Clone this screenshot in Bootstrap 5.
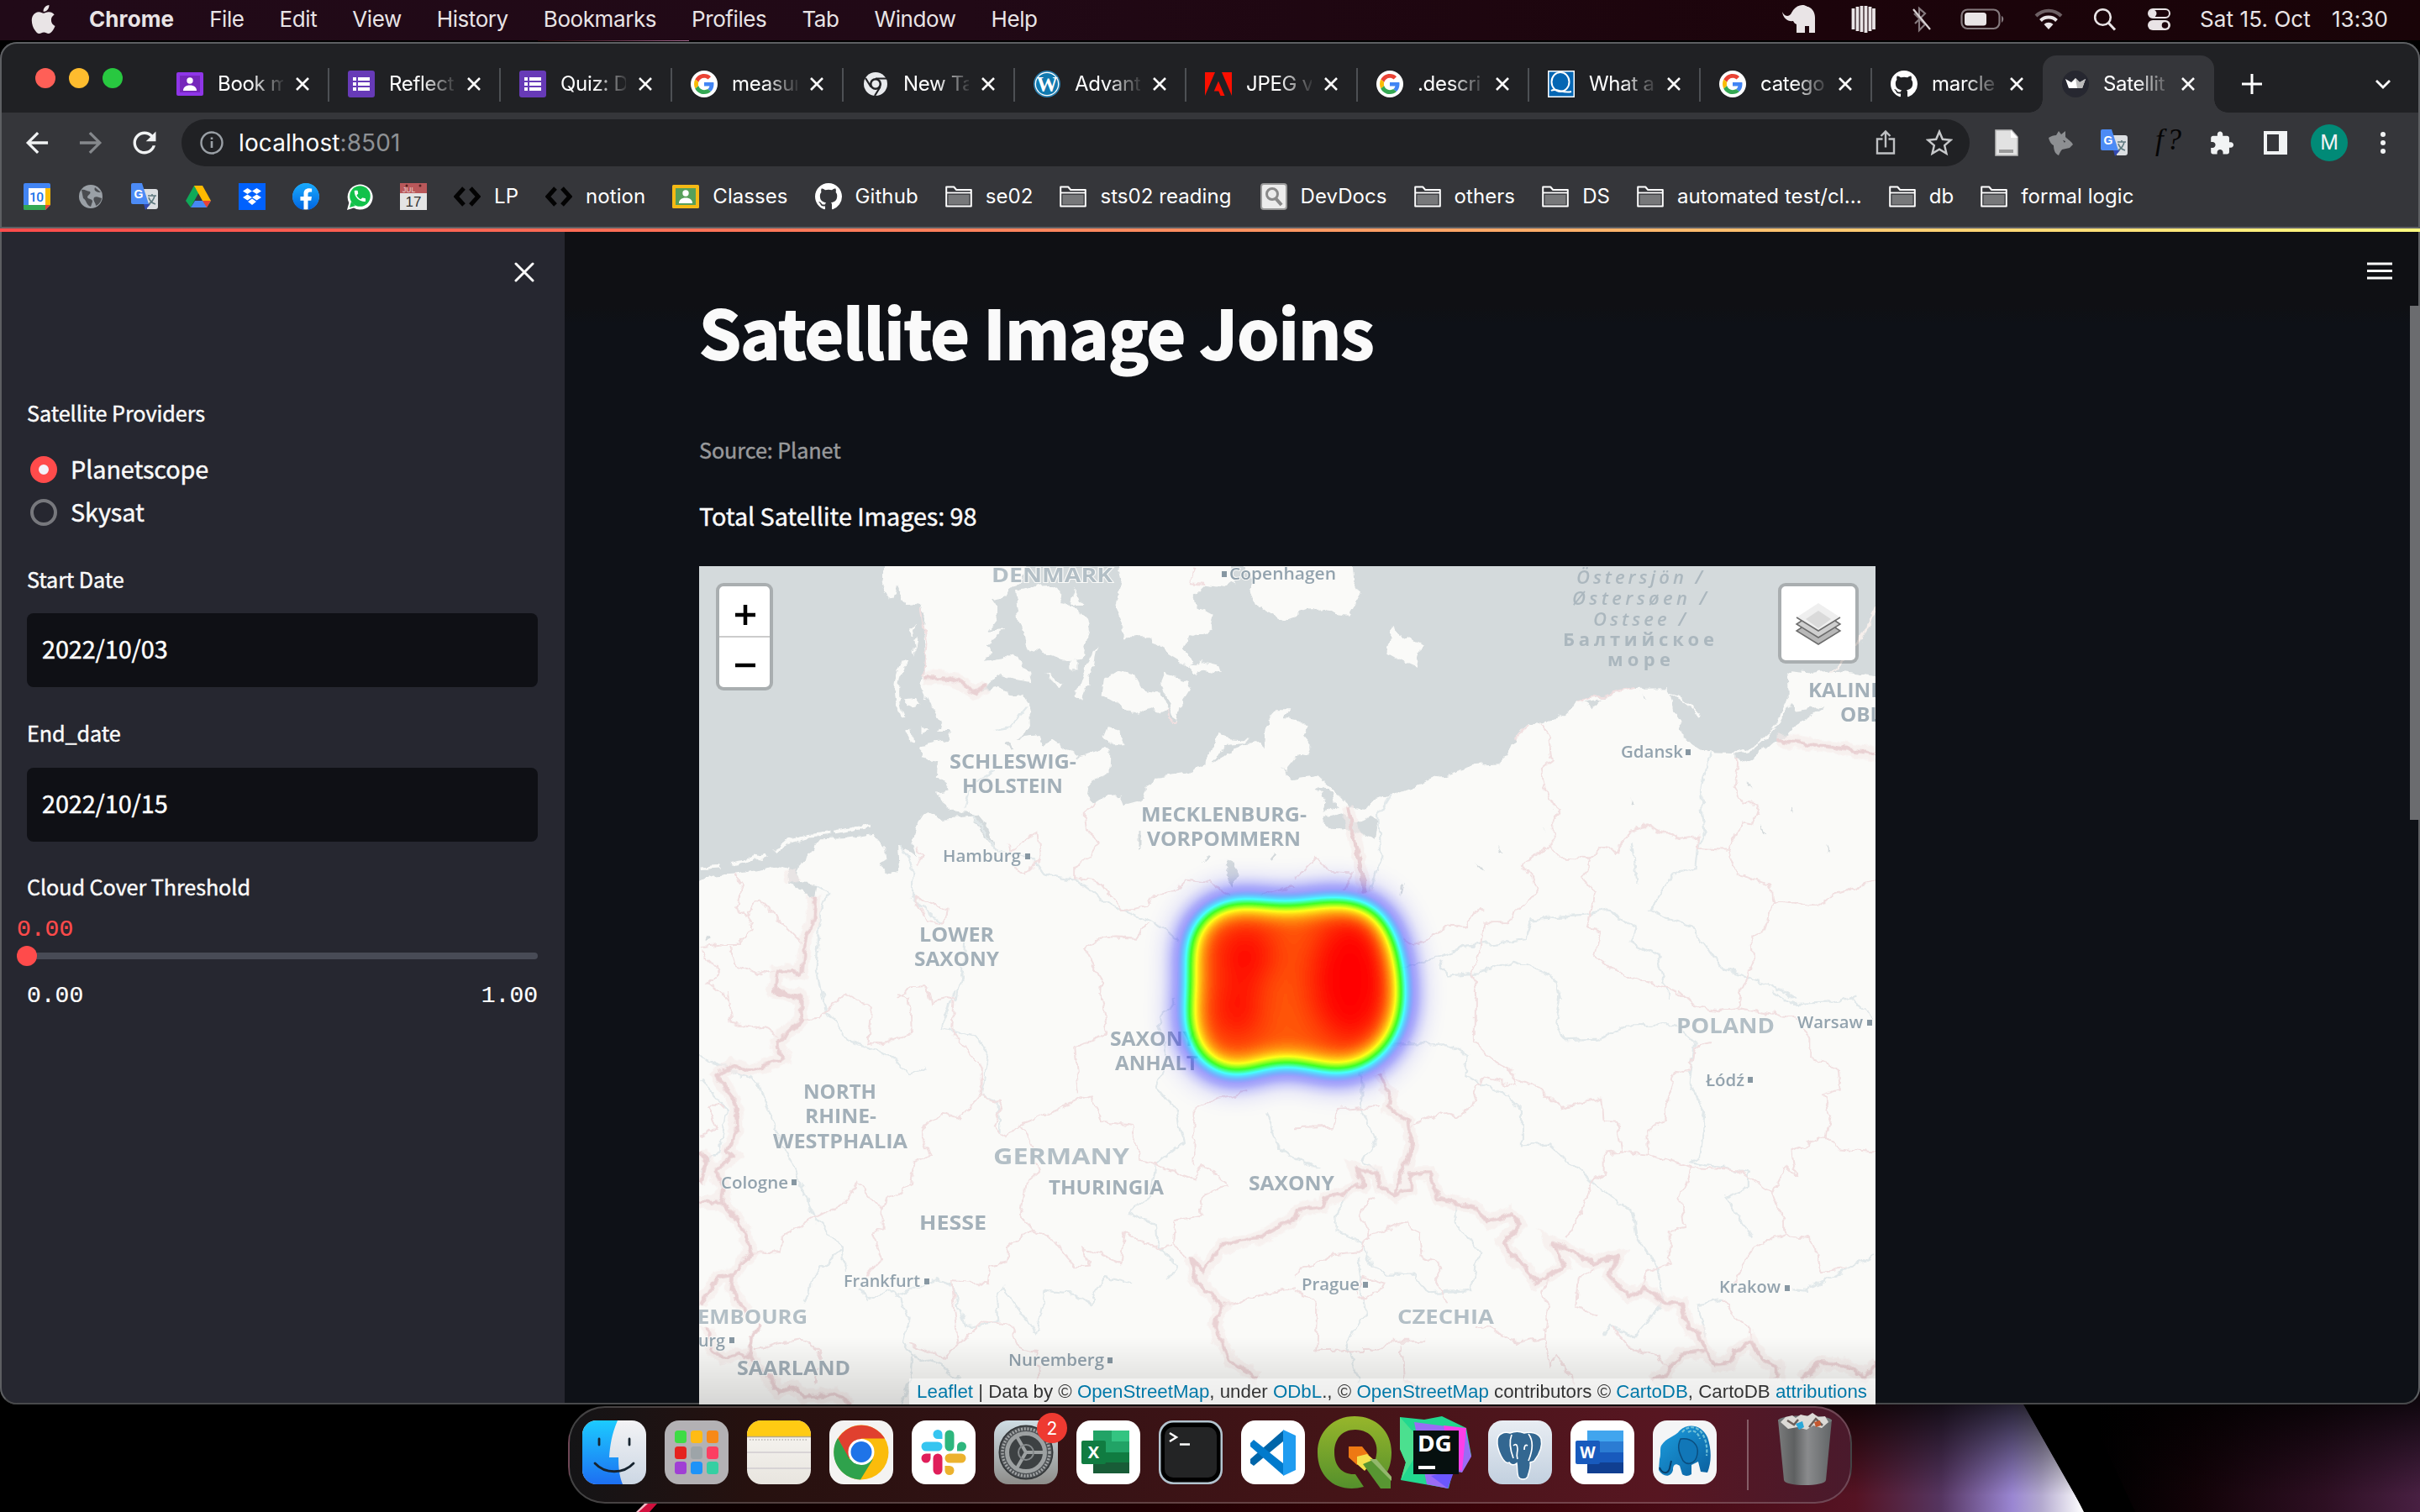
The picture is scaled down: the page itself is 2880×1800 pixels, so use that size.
<!DOCTYPE html>
<html lang="en">
<head>
<meta charset="utf-8">
<title>Satellite Image Joins</title>
<link href="https://cdn.jsdelivr.net/npm/bootstrap@5.3.0/dist/css/bootstrap.min.css" rel="stylesheet">
<style>
html,body{width:2880px;height:1800px;overflow:hidden;background:#000}
body{font-family:Inter,"Liberation Sans",sans-serif;color:#fff;margin:0}
svg{display:block;flex:none}
svg text{white-space:pre}
.desktop{width:2880px;height:1800px;position:relative;z-index:0}
.wallpaper{position:absolute;left:0;bottom:0;z-index:-1}
.menubar{height:48px;margin-bottom:2px;background:linear-gradient(90deg,#210a18,#210916 40%,#1c040b 75%,#190408);color:#e9e4e6;font-size:26px;line-height:46px;padding:0 38px 2px 37px;letter-spacing:-.42px}
.menus{gap:42px}
.menus b{font-weight:700;letter-spacing:.1px}
.tray{gap:34px}
.clock{width:224px;letter-spacing:.1px}
.browser{height:1622px;border-radius:20px;overflow:visible;position:relative;background:#35363a}
.browser::after{content:"";position:absolute;inset:0;border:2px solid #5d5f62;border-bottom-color:#48494b;border-radius:20px;pointer-events:none;z-index:2}
.tabstrip{height:84px;background:#202124;border-radius:20px 20px 0 0;padding-left:42px}
.lights{gap:16px;padding-top:31px;width:145px}
.lights i{width:24px;height:24px;border-radius:50%}
.ctab{width:204px;height:68px;margin-top:16px;padding-left:23px;position:relative;font-size:24px;letter-spacing:-.3px}
.ctab::after{content:"";position:absolute;right:-1px;top:15px;width:2px;height:40px;background:#4d5054}
.ctab.noline::after{display:none}
.ctab.current{background:#35363a;border-radius:16px 16px 0 0}
.ctab.current::before,.ctab.current::after{content:"";display:block;position:absolute;top:auto;bottom:0;width:16px;height:16px}
.ctab.current::before{left:-16px;background:radial-gradient(circle at 0 0,transparent 15.5px,#35363a 16px)}
.ctab.current::after{right:-16px;background:radial-gradient(circle at 100% 0,transparent 15.5px,#35363a 16px)}
.ttl{width:78px;margin:0 14px 0 17px;white-space:nowrap;overflow:hidden;-webkit-mask-image:linear-gradient(90deg,#000 50%,rgba(0,0,0,.1));mask-image:linear-gradient(90deg,#000 50%,rgba(0,0,0,.1))}
.toolrow{height:72px;padding:0 28px;color:#f1f3f4}
.omni{width:2128px;height:56px;border-radius:28px;background:#202124;margin:0 28px;padding:0 20px 0 22px;font-size:28px;letter-spacing:.1px}
.omni .dimmed{color:#8e9195}
.gap32{gap:32px}
.avatar{width:44px;height:44px;margin:0 -6px;border-radius:50%;background:#018a77;font-size:24px}
.marks{height:64px;padding:0 28px 8px;font-size:24px;letter-spacing:.07px;gap:32px}
.marks span{gap:16px;white-space:nowrap}
.hairline{height:2px;background:#5f6063}
.rainbow{height:4px;background:linear-gradient(90deg,#ff4b4b,#ff8f60 50%,#fffd80);position:relative;z-index:3}
.app{height:1394px;font-family:"Noto Sans CJK SC","Noto Sans CJK JP",sans-serif;background:#0e1117;border-radius:0 0 20px 20px;letter-spacing:-.08px;-webkit-text-stroke:.45px}
.side{width:672px;background:#262730;padding:0 32px;border-radius:0 0 0 20px;flex:none}
.side label,.field{font-size:25.2px;line-height:40px;display:block;color:#fafafa}
.closer{padding-top:36px;padding-right:4px;height:195px}
.opt{height:51px;font-size:28.8px;gap:16px;padding-left:4px;color:#fafafa}
.optname{margin-top:-2px}
.knob{width:32px;height:32px;border-radius:50%;border:4px solid #77787d}
.knob.on{border:10px solid #ff4b4b;background:#f3f3f9}
.datebox{height:88px;border-radius:8px;background:#0f1015;margin-top:21px;padding:0 18px 5px;font-size:28.8px}
.mono{font-family:"Liberation Mono",monospace;font-size:28px;line-height:32px;letter-spacing:0;-webkit-text-stroke:.2px}
.track{height:8px;border-radius:4px;background:#484b56;position:relative}
.track i{position:absolute;left:-12px;top:-8px;width:24px;height:24px;border-radius:50%;background:#ff4b4b}
.page{padding:69px 0 0 160px;position:relative;width:2208px;background:linear-gradient(#0f1014,#0f1014 90px,#0e1117 110px);border-radius:0 0 20px 0}
.page h1{font-size:80px;line-height:96px;font-weight:700;margin:0;color:#fafafa;white-space:nowrap;letter-spacing:-.75px;-webkit-text-stroke:2px}
.caption0{font-size:25.2px;line-height:40px;margin-top:74px;color:#98999b}
.total{font-size:28.8px;line-height:40px;margin-top:39px;color:#fafafa}
.burger{position:absolute;right:33px;top:36px}
.thumb{position:absolute;right:0;top:88px;width:12px;height:612px;background:#6b6c6f;z-index:3}
.mapbox{width:1400px;height:998px;margin-top:40px;position:relative;z-index:3;overflow:hidden;background:#d4dadc;font-family:"Liberation Sans",sans-serif;letter-spacing:0;-webkit-text-stroke:0}
.zoomer,.layers{position:absolute;top:20px;border:4px solid rgba(0,0,0,.2);border-radius:9px;background:#fff;background-clip:padding-box}
.zoomer{left:20px;width:68px;height:128px}
.layers{right:20px;width:96px;height:96px}
.zoomer svg{height:59px;width:60px}
.zoomer svg+svg{border-top:2px solid #ccc;height:61px}
.attrib{position:absolute;right:0;bottom:0;height:31px;width:1150px;background:rgba(255,255,255,.5);font-size:22.3px;line-height:31px;color:#333;padding-right:10px;white-space:nowrap}
.attrib a{color:#0078a8;text-decoration:none}
.shade{position:absolute;left:0;right:0;bottom:0;height:80px;background:linear-gradient(transparent,rgba(0,0,0,.14))}
.dock{width:1528px;height:116px;margin:2px auto 0;border-radius:44px;border:2px solid rgba(255,255,255,.2);background:linear-gradient(90deg,#141416,#26110f 14%,#331214 35%,#441417 60%,#571621 85%,#4a1a2c);padding:15px 15px 0;gap:22px}
.dock>svg{overflow:visible}
.rule{width:2px;flex:none;height:84px;margin:-1px 6px 0 14px;background:rgba(255,255,255,.3)}
.lbl text{font-family:"Open Sans","Noto Sans",sans-serif;font-weight:700;fill:#a3b0b9;font-size:23.500px;paint-order:stroke;stroke:#fafaf8;stroke-width:2px}
.lbl .town{font-size:20.5px;fill:#93a3ae;font-weight:600}
.lbl .land{fill:#b3bfc6}
.lbl .sea{fill:#abb7be;font-style:italic;stroke:none;font-size:22px;font-weight:600}
.thin{fill:none;stroke:#f1dfe0;stroke-width:2px}
.river{fill:none;stroke:#e1e8ea;stroke-width:2.2px}
.nation{fill:none;stroke:#e9d1d3;stroke-width:4.5px;stroke-linejoin:round}
.halo{fill:none;stroke:#f6ebea;stroke-width:16px;opacity:.6}
.thin path,.river path,.nation path,.halo path{vector-effect:non-scaling-stroke}
</style>
<script src="https://cdn.jsdelivr.net/npm/bootstrap@5.3.0/dist/js/bootstrap.bundle.min.js"></script>
</head>
<body>
<svg width="0" height="0" class="position-absolute">
<defs>
<linearGradient id="gBlue" x2="0" y2="1"><stop stop-color="#1ccbff"/><stop offset="1" stop-color="#1d6ff2"/></linearGradient>
<linearGradient id="gGrey" x2="0" y2="1"><stop stop-color="#f3f3f5"/><stop offset="1" stop-color="#ccd7e4"/></linearGradient>
<linearGradient id="gNote" x2="0" y2="1"><stop stop-color="#f8f6f2"/><stop offset="1" stop-color="#e8e5df"/></linearGradient>
<linearGradient id="gSet" x2="0" y2="1"><stop stop-color="#cfdde4"/><stop offset="1" stop-color="#8e8d8a"/></linearGradient>
<linearGradient id="gPg" x2="0" y2="1"><stop stop-color="#e8edf3"/><stop offset="1" stop-color="#c2d0df"/></linearGradient>
<linearGradient id="gQ" x2="0" y2="1"><stop stop-color="#97b62b"/><stop offset="1" stop-color="#54902c"/></linearGradient>
<linearGradient id="gFb" x2="0" y2="1"><stop stop-color="#18acfe"/><stop offset="1" stop-color="#0163e0"/></linearGradient>
<linearGradient id="gBin" x2="1" y2="0"><stop stop-color="#7c8080"/><stop offset=".3" stop-color="#5f6464"/><stop offset=".55" stop-color="#8d9192"/><stop offset="1" stop-color="#63696a"/></linearGradient>
<linearGradient id="gEl" x2="1" y2="1"><stop stop-color="#1d9fe0"/><stop offset="1" stop-color="#0a5f9e"/></linearGradient>
<symbol id="x" viewBox="0 0 18 18"><path d="M2 2l14 14M16 2L2 16" stroke="#fff" stroke-width="2.6" fill="none"/></symbol>
<symbol id="gh" viewBox="0 0 16 16"><path fill="#fff" d="M8 0C3.58 0 0 3.58 0 8c0 3.54 2.29 6.53 5.47 7.59.4.07.55-.17.55-.38 0-.19-.01-.82-.01-1.49-2.01.37-2.53-.49-2.69-.94-.09-.23-.48-.94-.82-1.13-.28-.15-.68-.52-.01-.53.63-.01 1.08.58 1.23.82.72 1.21 1.87.87 2.33.66.07-.52.28-.87.51-1.07-1.78-.2-3.64-.89-3.64-3.95 0-.87.31-1.59.82-2.15-.08-.2-.36-1.02.08-2.12 0 0 .67-.21 2.2.82.64-.18 1.32-.27 2-.27s1.36.09 2 .27c1.53-1.04 2.2-.82 2.2-.82.44 1.1.16 1.92.08 2.12.51.56.82 1.27.82 2.15 0 3.07-1.87 3.75-3.65 3.95.29.25.54.73.54 1.48 0 1.07-.01 1.93-.01 2.2 0 .21.15.46.55.38A8.01 8.01 0 0 0 16 8c0-4.42-3.58-8-8-8"/></symbol>
<symbol id="goo" viewBox="0 0 32 32"><circle cx="16" cy="16" r="16" fill="#fff"/><g transform="translate(4 4) scale(.5)"><path fill="#EA4335" d="M24 9.5c3.54 0 6.71 1.22 9.21 3.6l6.85-6.85C35.9 2.38 30.47 0 24 0 14.62 0 6.51 5.38 2.56 13.22l7.98 6.19C12.43 13.72 17.74 9.5 24 9.5z"/><path fill="#4285F4" d="M46.98 24.55c0-1.57-.15-3.09-.38-4.55H24v9.02h12.94c-.58 2.96-2.26 5.48-4.78 7.18l7.73 6c4.51-4.18 7.09-10.36 7.09-17.65z"/><path fill="#FBBC05" d="M10.53 28.59c-.48-1.45-.76-2.99-.76-4.59s.27-3.14.76-4.59l-7.98-6.19C.92 16.46 0 20.12 0 24c0 3.88.92 7.54 2.56 10.78l7.97-6.19z"/><path fill="#34A853" d="M24 48c6.48 0 11.93-2.13 15.89-5.81l-7.73-6c-2.15 1.45-4.92 2.3-8.16 2.3-6.26 0-11.57-4.22-13.47-9.91l-7.98 6.19C6.51 42.62 14.62 48 24 48z"/></g></symbol>
<symbol id="form" viewBox="0 0 32 32"><rect width="32" height="32" rx="3" fill="#673ab7"/><path fill="#fff" d="M6 8h4v4H6zm6 0h14v4H12zM6 14h4v4H6zm6 0h14v4H12zM6 20h4v4H6zm6 0h14v4H12z"/></symbol>
<symbol id="folder" viewBox="0 0 32 32"><path d="M1.2 4.5h9l3 3.500h17.600v19.500H1.200z" fill="none" stroke="#fff" stroke-width="2" stroke-linejoin="round"/><path d="M2 11.500h28" stroke="#fff" stroke-width="1.800"/><path d="M3.500 13.800h25v11.700h-25z" fill="#77787a"/></symbol>
<symbol id="trans" viewBox="0 0 32 32"><path d="M13 7h16a3 3 0 0 1 3 3v18a3 3 0 0 1-3 3H19z" fill="#dcdfe2"/><path d="M17 32l6-7h-8z" fill="#3249b0"/><path d="M2 0h11l8 25H2a2 2 0 0 1-2-2V2a2 2 0 0 1 2-2z" fill="#4c8bf5"/><text x="3.5" y="17.500" font-size="14" font-weight="700" font-family="Liberation Sans" fill="#fff">G</text><path d="M20 15h10M25 13v2M28 15c-1 5-4 8-7 10M21 17c1 4 5 7 8 8" stroke="#5f7a80" stroke-width="1.6" fill="none"/></symbol>
<symbol id="code" viewBox="0 0 32 32"><path d="M12 6L3 16l9 10M20 6l9 10-9 10" fill="none" stroke="#030303" stroke-width="5"/></symbol>
<symbol id="person" viewBox="0 0 32 32"><circle cx="16" cy="12" r="3.700"/><path d="M8 24c0-4 3-6.500 8-6.500s8 2.500 8 6.500z"/></symbol>
<g id="pgface"><path d="M11 24c0-8 8-11 15-9 5-2 12-2 17 0 8-2 17 0 20 7 2 8-2 18-8 26-2 2-4 1-5 2 1 4-2 14-3 17-2 4-9 4-11 0-2-5-1-12-2-16-3 3-7 2-9-1-6 4-15-16-14-26z"/></g>
</defs>
</svg>

<div class="desktop d-flex flex-column">
<svg class="wallpaper" width="2880" height="1800" viewBox="0 0 2880 1800">
<defs>
<linearGradient id="wl" gradientUnits="userSpaceOnUse" x1="780" x2="2480" y1="0" y2="0"><stop stop-color="#0a0000"/><stop offset=".35" stop-color="#200003"/><stop offset=".6" stop-color="#3c0309"/><stop offset=".84" stop-color="#551323"/><stop offset=".9" stop-color="#553560"/><stop offset=".95" stop-color="#9a86d2"/><stop offset=".97" stop-color="#b3a9cf"/><stop offset="1" stop-color="#fff"/></linearGradient>
<linearGradient id="wr" gradientUnits="userSpaceOnUse" x1="2500" x2="2880" y1="0" y2="0"><stop stop-color="#000"/><stop offset=".3" stop-color="#120308"/><stop offset=".7" stop-color="#2d0f22"/><stop offset="1" stop-color="#482042"/></linearGradient>
<linearGradient id="wd" gradientUnits="userSpaceOnUse" x1="0" x2="0" y1="1660" y2="1780"><stop stop-color="#000" stop-opacity=".85"/><stop offset="1" stop-color="#000" stop-opacity="0"/></linearGradient>
<linearGradient id="wt" gradientUnits="userSpaceOnUse" x1="640" x2="820" y1="0" y2="0"><stop stop-color="#200"/><stop offset="1" stop-color="#a0688e"/></linearGradient>
</defs>
<path d="M0 0h2880v1800H0z" fill="#000"/>
<path d="M640 48h180v1H640z" fill="url(#wt)"/>
<path d="M900 1640h1490l91 160H775z" fill="url(#wl)"/>
<path d="M2400 1640h480v160h-400z" fill="url(#wr)"/>
<path d="M0 1600h2880v200H0z" fill="url(#wd)"/>
<path d="M2390 1672h18.500L2481 1800h60l-60-128z" fill="#000"/>
<path d="M758 1800l12-10h12l-9 10z" fill="#d00f3c"/><path d="M757 1800l10-10h4l-11 10z" fill="#f4b8c4"/>
</svg>

<div class="menubar d-flex align-items-center justify-content-between">
 <div class="menus d-flex align-items-center">
  <svg width="30" height="34" viewBox="2 0 20.500 24" style="margin-right:-3px"><path fill="#e9e4e6" d="M12.152 6.896c-.948 0-2.415-1.078-3.96-1.040-2.040.027-3.910 1.183-4.961 3.014-2.117 3.675-.546 9.103 1.519 12.090 1.013 1.454 2.208 3.090 3.792 3.039 1.520-.065 2.090-.987 3.935-.987 1.831 0 2.350.987 3.960.948 1.637-.026 2.676-1.480 3.676-2.948 1.156-1.688 1.636-3.325 1.662-3.415-.039-.013-3.182-1.221-3.220-4.857-.026-3.040 2.480-4.494 2.597-4.559-1.429-2.090-3.623-2.324-4.390-2.376-2-.156-3.675 1.090-4.610 1.090zM15.530 3.830c.843-1.012 1.400-2.427 1.245-3.830-1.207.052-2.662.805-3.532 1.818-.780.896-1.454 2.338-1.273 3.714 1.338.104 2.715-.688 3.559-1.701"/></svg>
  <b>Chrome</b><span>File</span><span>Edit</span><span>View</span><span>History</span><span>Bookmarks</span><span>Profiles</span><span>Tab</span><span>Window</span><span>Help</span>
 </div>
 <div class="tray d-flex align-items-center">
  <svg width="44" height="34" viewBox="0 0 44 34"><path fill="#e9e4e6" d="M1 8c1 2 3 5 6 5 4 0 5-4 7-7 3-4 7-6 11-6 4 0 5 2 7 2 5 2 8 7 8 13v18h-7v-8h-5v8H18v-10c-2-1-3-2-4-4C8 20 2 16 1 8z"/></svg>
  <svg width="40" height="34" viewBox="0 0 40 34"><path stroke="#e9e4e6" stroke-width="3.800" d="M7.500 4v25M12.500 2v29M17.500 1v31M22.500 1v32M27.500 2v29M32 4v25"/></svg>
  <svg width="26" height="34" viewBox="0 0 26 34"><path fill="none" stroke="#857a7e" stroke-width="2.200" d="M6 10l13 13-7 7V4l7 6-12 12"/><path stroke="#d8d2d4" stroke-width="2.200" d="M5 5l20 24"/></svg>
  <svg width="54" height="26" viewBox="0 0 54 26"><rect x="2.500" y="1.500" width="45" height="22.500" rx="7" fill="none" stroke="#857a7e" stroke-width="2.200"/><rect x="6" y="5" width="26" height="15.500" rx="3.500" fill="#e9e4e6"/><path d="M50 9c3 1 3 6 0 8z" fill="#857a7e"/></svg>
  <svg width="36" height="26" viewBox="0 0 36 26"><path fill="none" stroke="#6d6064" stroke-width="4" d="M3 9a21 21 0 0 1 30 0"/><path fill="none" stroke="#e9e4e6" stroke-width="4" d="M8.500 14.500a13.500 13.500 0 0 1 19 0"/><path fill="#e9e4e6" d="M18 25l-5.500-6a8 8 0 0 1 11 0z"/></svg>
  <svg width="30" height="30" viewBox="0 0 30 30"><circle cx="12.500" cy="12.500" r="9.300" fill="none" stroke="#e9e4e6" stroke-width="2.600"/><path d="M19 19l8 8.500" stroke="#e9e4e6" stroke-width="3"/></svg>
  <svg width="30" height="30" viewBox="0 0 30 30"><rect x="3" y="3" width="25" height="10" rx="5" fill="none" stroke="#e9e4e6" stroke-width="2"/><circle cx="8" cy="8" r="4.500" fill="#e9e4e6"/><rect x="2" y="16" width="27" height="12" rx="6" fill="#e9e4e6"/><circle cx="22.500" cy="22" r="3.800" fill="#1c040b"/></svg>
  <span class="clock d-flex justify-content-between"><span>Sat 15. Oct</span><span>13:30</span></span>
 </div>
</div>

<div class="browser">
 <div class="tabstrip d-flex">
  <div class="lights d-flex"><i style="background:#ff5f57"></i><i style="background:#febc2e"></i><i style="background:#28c840"></i></div>
  <div class="ctab d-flex align-items-center"><svg width="32" height="32"><rect y="2" width="32" height="28" rx="2" fill="#8f35e8"/><rect x="4" y="6" width="24" height="20" fill="#7627bb"/><use href="#person" fill="#fff"/></svg><span class="ttl">Book m</span><svg width="18" height="18"><use href="#x"/></svg></div>
  <div class="ctab d-flex align-items-center"><svg width="32" height="32"><use href="#form"/></svg><span class="ttl">Reflect</span><svg width="18" height="18"><use href="#x"/></svg></div>
  <div class="ctab d-flex align-items-center"><svg width="32" height="32"><use href="#form"/></svg><span class="ttl">Quiz: D</span><svg width="18" height="18"><use href="#x"/></svg></div>
  <div class="ctab d-flex align-items-center"><svg width="32" height="32"><use href="#goo"/></svg><span class="ttl">measur</span><svg width="18" height="18"><use href="#x"/></svg></div>
  <div class="ctab d-flex align-items-center"><svg width="32" height="32" viewBox="0 0 32 32"><circle cx="16" cy="16" r="14" fill="#e8eaed"/><circle cx="16" cy="16" r="5.800" fill="#e8eaed" stroke="#202124" stroke-width="2.600"/><path d="M16 9.500h13M10.500 19.500L4 9M21.500 19.500L15 30" stroke="#202124" stroke-width="2.200"/></svg><span class="ttl">New Ta</span><svg width="18" height="18"><use href="#x"/></svg></div>
  <div class="ctab d-flex align-items-center"><svg width="32" height="32" viewBox="0 0 32 32"><circle cx="16" cy="16" r="16" fill="#2b7fae"/><circle cx="16" cy="16" r="14.300" fill="#fff"/><circle cx="16" cy="16" r="13" fill="#117ab0"/><text x="3.500" y="25" font-family="Liberation Serif" font-weight="700" font-size="26" textLength="25" lengthAdjust="spacingAndGlyphs" fill="#fff">W</text></svg><span class="ttl">Advant</span><svg width="18" height="18"><use href="#x"/></svg></div>
  <div class="ctab d-flex align-items-center"><svg width="32" height="32" viewBox="0 0 32 32"><path fill="#fa0f00" d="M0 2h12L0 30zM20 2h12v28zM16 12.500L23.500 30h-5l-2.200-5.600h-5.500z"/></svg><span class="ttl">JPEG v</span><svg width="18" height="18"><use href="#x"/></svg></div>
  <div class="ctab d-flex align-items-center"><svg width="32" height="32"><use href="#goo"/></svg><span class="ttl">.descri</span><svg width="18" height="18"><use href="#x"/></svg></div>
  <div class="ctab d-flex align-items-center"><svg width="32" height="32" viewBox="0 0 32 32"><rect width="32" height="32" fill="#fff"/><rect x="1.500" y="1.500" width="29" height="29" fill="#0566b3"/><ellipse cx="15" cy="13.500" rx="10.500" ry="11.500" fill="none" stroke="#fff" stroke-width="2"/><path d="M4 24c6-4 14 4 24 1" stroke="#fff" stroke-width="2" fill="none"/></svg><span class="ttl">What a</span><svg width="18" height="18"><use href="#x"/></svg></div>
  <div class="ctab d-flex align-items-center"><svg width="32" height="32"><use href="#goo"/></svg><span class="ttl">catego</span><svg width="18" height="18"><use href="#x"/></svg></div>
  <div class="ctab noline d-flex align-items-center"><svg width="32" height="32"><use href="#gh"/></svg><span class="ttl">marcle</span><svg width="18" height="18"><use href="#x"/></svg></div>
  <div class="ctab current d-flex align-items-center"><svg width="32" height="32" viewBox="0 0 32 32"><circle cx="16" cy="16" r="16" fill="#262730"/><path fill="#fff" d="M4 10l7 4 5-5 5 5 7-4-4 11H8z"/><path fill="#bbb" d="M16 9l5 5 7-4-4 11h-6z"/></svg><span class="ttl">Satellit</span><svg width="18" height="18"><use href="#x"/></svg></div>
  <div class="d-flex align-items-center justify-content-between flex-grow-1" style="padding:16px 32px 0 32px"><svg width="26" height="26"><path d="M13 1v24M1 13h24" stroke="#fff" stroke-width="3"/></svg><svg width="24" height="24"><path d="M4 8l8 8 8-8" stroke="#fff" stroke-width="2.800" fill="none"/></svg></div>
 </div>
 <div class="toolrow d-flex align-items-center">
  <div class="d-flex gap32">
   <svg width="32" height="32" viewBox="2.200 2.200 19.600 19.600"><path fill="#f1f3f4" d="M20 11H7.830l5.590-5.590L12 4l-8 8 8 8 1.410-1.410L7.830 13H20v-2z"/></svg>
   <svg width="32" height="32" viewBox="2.200 2.200 19.600 19.600"><path fill="#85888c" transform="rotate(180 12 12)" d="M20 11H7.830l5.590-5.590L12 4l-8 8 8 8 1.410-1.410L7.830 13H20v-2z"/></svg>
   <svg width="32" height="32" viewBox="2.500 2.500 19 19"><path fill="#f1f3f4" d="M17.650 6.350C16.200 4.900 14.210 4 12 4c-4.420 0-7.990 3.580-7.990 8s3.570 8 7.990 8c3.730 0 6.840-2.550 7.730-6h-2.080c-.820 2.330-3.040 4-5.650 4-3.310 0-6-2.690-6-6s2.690-6 6-6c1.660 0 3.140.690 4.220 1.780L13 11h7V4l-2.350 2.350z"/></svg>
  </div>
  <div class="omni d-flex align-items-center">
   <svg width="28" height="28"><circle cx="14" cy="14" r="12.500" fill="none" stroke="#9aa0a6" stroke-width="2.400"/><path d="M14 12v8M14 7.500v2.600" stroke="#9aa0a6" stroke-width="2.600"/></svg>
   <span class="flex-grow-1 text-white" style="margin-left:18px">localhost<span class="dimmed">:8501</span></span>
   <div class="d-flex gap32 align-items-center"><svg width="32" height="32"><path d="M12 12H5.500v17h20V12H19M15.500 22V3M10 8.500L15.500 3 21 8.500" transform="translate(.5 -.5)" stroke="#bfc1c4" stroke-width="2.400" fill="none"/></svg>
   <svg width="32" height="32" viewBox="1 1 30 30"><path d="M16 3.500l3.600 8.600 9.200.8-7 6.100 2.100 9L16 23.200 8.100 28l2.100-9-7-6.100 9.200-.8z" stroke="#c7c9cb" stroke-width="2.300" fill="none"/></svg></div>
  </div>
  <div class="d-flex gap32 align-items-center">
   <svg width="32" height="32"><path d="M3 1h19l7 8v22H3z" fill="#e2e2e2" stroke="#bbb" stroke-width="1.500"/><path d="M21 1v9h8z" fill="#fff"/><path d="M7 24h17v4H7z" fill="#9a9a9a"/></svg>
   <svg width="32" height="32"><path fill="#8d8f92" d="M2 10c3-2 6-3 9-3l3-5 3 4 5-4v7c3 3 8 6 9 9l-4 4-9 2c-2 2-3 5-4 7-5-2-6-8-6-12-3-1-5-5-6-9z"/><path fill="#35363a" d="M19 13l3 1-1 2z"/></svg>
   <svg width="32" height="32"><use href="#trans"/></svg>
   <svg width="32" height="34" overflow="visible"><text x="1" y="25" font-family="Liberation Serif" font-style="italic" font-size="35" fill="#050505" textLength="31">f?</text></svg>
   <svg width="32" height="32" viewBox="0 0 25 25"><path fill="#f1f3f4" transform="translate(.5 1)" d="M20.500 11H19V7c0-1.100-.9-2-2-2h-4V3.500C13 2.120 11.880 1 10.500 1S8 2.120 8 3.500V5H4c-1.100 0-1.990.9-1.990 2v3.800H3.500c1.490 0 2.700 1.210 2.700 2.700s-1.210 2.700-2.700 2.700H2V20c0 1.100.9 2 2 2h3.800v-1.500c0-1.490 1.210-2.700 2.700-2.700 1.490 0 2.700 1.210 2.700 2.700V22H17c1.100 0 2-.9 2-2v-4h1.500c1.380 0 2.500-1.120 2.500-2.500S21.880 11 20.500 11z"/></svg>
   <svg width="32" height="32"><path fill="#f1f3f4" fill-rule="evenodd" d="M2 2h28v28H2zM6 6v20h14V6z"/></svg>
   <span class="avatar d-flex align-items-center justify-content-center">M</span>
   <svg width="32" height="32"><g fill="#f1f3f4"><circle cx="16" cy="6" r="3"/><circle cx="16" cy="16" r="3"/><circle cx="16" cy="26" r="3"/></g></svg>
  </div>
 </div>
 <div class="marks d-flex align-items-center">
  <svg width="32" height="32"><path d="M2 0h28a2 2 0 0 1 2 2v24l-6 6H2a2 2 0 0 1-2-2V2a2 2 0 0 1 2-2z" fill="#4285f4"/><path d="M26 6h6v20h-6z" fill="#fbbc04"/><path d="M0 26h26v6H2a2 2 0 0 1-2-2z" fill="#34a853"/><path d="M26 26h6l-6 6z" fill="#ea4335"/><path d="M6 6h20v20H6z" fill="#fff"/><text x="7" y="22" font-size="15.500" letter-spacing="-.6" font-family="Roboto" fill="#1a73e8" font-weight="500">10</text></svg>
  <svg width="32" height="32"><circle cx="16" cy="16" r="14" fill="#9aa0a6"/><path d="M5 8c4-1 6 2 10 2 2 3-3 4-3 7 2 3 6 1 6 5l-2 6c-5-1-5-8-9-10zM21 5c-2 4 2 6 7 6M20 17c3-2 6 0 9 1-1 5-4 8-7 9 0-4-4-6-2-10z" fill="#4a4c50"/></svg>
  <svg width="32" height="32"><use href="#trans"/></svg>
  <svg width="32" height="32"><path d="M11 3h10L7 29 1 21z" fill="#0fa958"/><path d="M11 3h10l10 18H21z" fill="#ffba00"/><path d="M7 29l5-8h19l-5 8z" fill="#4688f4"/><path d="M26 29l-5-8h10z" fill="#ea4335"/></svg>
  <svg width="32" height="32"><path d="M0 0h32v32H0z" fill="#0061fe"/><path fill="#fff" d="M10.500 6L16 9.500 10.500 13 5 9.500zM21.500 6L27 9.500 21.500 13 16 9.500zM10.500 13.500L16 17l-5.500 3.500L5 17zM21.500 13.500L27 17l-5.500 3.500L16 17zM16 18.500l5 3.500-5 4-5-4z"/></svg>
  <svg width="32" height="32" viewBox="0 0 16 16"><circle cx="8" cy="8" r="7.800" fill="#fff"/><path fill="url(#gFb)" d="M16 8.049c0-4.446-3.582-8.050-8-8.050C3.580 0-.002 3.603-.002 8.050c0 4.017 2.926 7.347 6.750 7.951v-5.625h-2.030V8.050H6.750V6.275c0-2.017 1.195-3.131 3.022-3.131.876 0 1.791.157 1.791.157v1.980h-1.009c-.993 0-1.303.621-1.303 1.258v1.510h2.218l-.354 2.326H9.250V16c3.824-.604 6.750-3.934 6.750-7.951"/></svg>
  <svg width="32" height="32"><path d="M1 32l2.300-8.500A15 15 0 1 1 9 29.500z" fill="#fff"/><circle cx="16.500" cy="15.500" r="12.300" fill="#12c14a"/><path d="M4 29l2-7 5 5z" fill="#12c14a"/><path transform="translate(7.500 6.500) scale(.74)" fill="#fff" d="M6.620 10.790c1.440 2.830 3.760 5.140 6.590 6.590l2.200-2.200c.27-.27.67-.36 1.020-.24 1.120.37 2.330.57 3.570.57.55 0 1 .45 1 1V20c0 .55-.45 1-1 1-9.390 0-17-7.610-17-17 0-.55.45-1 1-1h3.500c.55 0 1 .45 1 1 0 1.250.2 2.450.57 3.570.11.35.03.74-.25 1.020l-2.200 2.200z"/></svg>
  <svg width="32" height="32"><path d="M0 0h32v32H0z" fill="#e4e4e4"/><path d="M0 0h32v12H0z" fill="#b9585a"/><text x="3" y="11" font-size="8.500" font-family="Liberation Sans" fill="#eccfcf">JUL</text><circle cx="8" cy="3" r="1.500" fill="#522"/><circle cx="24" cy="3" r="1.500" fill="#522"/><text x="6.500" y="28" font-size="17" font-family="Liberation Sans" fill="#333">17</text></svg>
  <span class="d-flex align-items-center"><svg width="32" height="32"><use href="#code"/></svg>LP</span>
  <span class="d-flex align-items-center"><svg width="32" height="32"><use href="#code"/></svg>notion</span>
  <span class="d-flex align-items-center"><svg width="32" height="32"><rect y="2" width="32" height="28" rx="1.500" fill="#f5ba15"/><rect x="4" y="6" width="24" height="20" fill="#57a05a"/><use href="#person" fill="#fff"/></svg>Classes</span>
  <span class="d-flex align-items-center"><svg width="32" height="32"><use href="#gh"/></svg>Github</span>
  <span class="d-flex align-items-center"><svg width="32" height="32"><use href="#folder"/></svg>se02</span>
  <span class="d-flex align-items-center"><svg width="32" height="32"><use href="#folder"/></svg>sts02 reading</span>
  <span class="d-flex align-items-center" style="margin-left:2px"><svg width="32" height="32"><rect x="1" y="1" width="30" height="30" rx="3" fill="#ececec" stroke="#999" stroke-width="2"/><circle cx="14" cy="13" r="6.500" fill="none" stroke="#8a8a8a" stroke-width="3"/><path d="M18 18l7 8" stroke="#8a8a8a" stroke-width="4"/></svg>DevDocs</span>
  <span class="d-flex align-items-center"><svg width="32" height="32"><use href="#folder"/></svg>others</span>
  <span class="d-flex align-items-center"><svg width="32" height="32"><use href="#folder"/></svg>DS</span>
  <span class="d-flex align-items-center"><svg width="32" height="32"><use href="#folder"/></svg>automated test/cl...</span>
  <span class="d-flex align-items-center"><svg width="32" height="32"><use href="#folder"/></svg>db</span>
  <span class="d-flex align-items-center"><svg width="32" height="32"><use href="#folder"/></svg>formal logic</span>
 </div>
 <div class="hairline"></div>
 <div class="rainbow"></div>
 <div class="app d-flex">
  <aside class="side">
   <div class="closer d-flex justify-content-end"><svg width="24" height="24"><path d="M2 2l20 20M22 2L2 22" stroke="#fafafa" stroke-width="3" stroke-linecap="round"/></svg></div>
   <label>Satellite Providers</label>
   <div style="padding-top:22px">
    <div class="opt d-flex align-items-center"><i class="knob on"></i><span class="optname">Planetscope</span></div>
    <div class="opt d-flex align-items-center"><i class="knob"></i><span class="optname">Skysat</span></div>
   </div>
   <label style="margin-top:34px">Start Date</label>
   <div class="datebox d-flex align-items-center">2022/10/03</div>
   <label style="margin-top:34px">End_date</label>
   <div class="datebox d-flex align-items-center" style="margin-top:22px">2022/10/15</div>
   <label style="margin-top:33px">Cloud Cover Threshold</label>
   <div class="mono" style="color:#ff4b4b;margin:16px 0 11px -12px">0.00</div>
   <div class="track"><i></i></div>
   <div class="mono d-flex justify-content-between" style="margin-top:28px"><span>0.00</span><span>1.00</span></div>
  </aside>
  <main class="page">
   <svg class="burger" width="30" height="22"><path d="M0 2h30M0 10.500h30M0 19h30" stroke="#fafafa" stroke-width="3.200"/></svg>
   <div class="thumb"></div>
   <h1>Satellite Image Joins</h1>
   <div class="caption0">Source: Planet</div>
   <div class="total">Total Satellite Images: 98</div>
   <div class="mapbox">
    <svg width="1400" height="998" viewBox="0 0 1400 998">
     <defs>
      <filter id="rag" x="0" y="0" width="1400" height="998" filterUnits="userSpaceOnUse"><feTurbulence type="fractalNoise" baseFrequency=".07" numOctaves="3" seed="4"/><feDisplacementMap in="SourceGraphic" scale="11" xChannelSelector="R" yChannelSelector="G"/></filter>
      <filter id="heat" x="480" y="300" width="480" height="420" filterUnits="userSpaceOnUse" color-interpolation-filters="sRGB"><feGaussianBlur stdDeviation="19"/><feColorMatrix values="0 0 0 1 0  0 0 0 1 0  0 0 0 1 0  0 0 0 1 0"/><feComponentTransfer><feFuncR type="table" tableValues="0 0 0 0 .2 .2 .2 .2 1 1 1"/><feFuncG type="table" tableValues="0 0 0 0 .2 .6 1 1 1 .5 0"/><feFuncB type="table" tableValues="1 1 1 1 1 1 1 .1 .1 .05 0"/><feFuncA type="table" tableValues="0 .06 .16 .28 .45 .7 .9 .95 1 1 1"/></feComponentTransfer></filter>
     </defs>
     <g filter="url(#rag)">
     <path d="M-20-20h1440v1040H-20z" fill="#d4dadc"/>
     <g fill="#fafaf8">
      <g transform="matrix(.4592 0 0 .3333 -12 -4)">
       <path d="M-30 1150L26 1140 60 1115 150 1105 230 1085 258 1095 262 1145 300 1180 325 1185 330 1145 283 1140 285 1080 305 1050 340 988 400 985 480 968 490 990 512 1020 515 1060 493 1080 520 1112 545 1100 540 1015 590 1050 578 1000 595 920 610 888 650 915 735 905 760 965 800 1030 775 950 745 900 720 886 680 888 655 860 645 820 672 815 665 790 642 760 645 710 598 700 600 655 665 635 680 600 645 600 655 570 630 520 612 470 600 430 610 400 612 330 608 250 612 200 600 155 560 150 540 85 530 130 498 98 505 60 512-40 880-40 860 72 830 85 815 120 780 130 795 160 800 200 775 245 820 240 770 290 780 320 765 350 840 335 880 390 885 430 850 420 800 400 760 455 800 440 850 480 865 470 880 500 882 600 850 625 905 615 915 650 940 635 990 670 1015 693 1080 660 1092 670 1090 740 1030 795 1028 820 1055 858 1080 835 1120 830 1130 865 1170 850 1190 800 1210 768 1300 750 1345 700 1365 640 1375 615 1400 628 1455 632 1440 645 1385 652 1355 720 1410 665 1440 650 1480 640 1500 690 1540 735 1575 800V3200H-30z"/>
       <path d="M845 100L900 80 940 78 970 110 960 150 1000 160 1030 200 1037 250 1020 340 990 350 940 330 880 310 870 260 855 210zM1105-40L1120 60 1105 160 1125 220 1125 265 1190 265 1230 300 1240 330 1300 380 1310 350 1280 310 1290 270 1350 240 1360 190 1320 160 1310 120 1340 80 1390 90 1410 70 1400-40zM1420-40L1460 60 1450 90 1470 150 1540 205 1580 185V-40zM1080 410L1110 385 1150 400 1170 450 1215 460 1245 520 1230 535 1190 520 1165 545 1120 510 1075 475zM1230 395L1290 420 1302 450 1270 520 1262 570 1245 500 1220 430zM1300 375L1320 350 1375 370 1380 390 1330 380 1310 400zM1060 295L1050 360 1030 440 1015 495 1005 470 1030 370zM925 390L970 435 960 450zM820 335L860 350 885 420 850 410 830 370zM1085 590L1115 600 1135 645 1090 650 1075 625zM1500 560L1525 520 1558 520 1545 555 1580 565V690L1550 740 1520 720 1490 680 1495 600zM560 490L590 485 600 505 575 520 560 510zM985 355L1005 345 1005 385 985 385zM1000 90L1020 150 985 150zM600 580L620 590 600 615zM575 230L590 225 580 260zM580 275L592 270 585 330z"/>
       <path d="M560 350Q535 420 540 480T555 550M30 1090L80 1085M110 1080L200 1045M220 1025L250 1000 310 975 370 965M380 962L470 938M570 600L575 640" fill="none" stroke="#fafaf8" stroke-width="11"/>
      </g>
      <g transform="matrix(.4592 0 0 .3333 708 -4)">
       <path d="M-10 775L40 765 60 760 100 810 145 872 175 880 210 850 360 770 470 720 530 715 560 670 575 620 610 580 680 560 740 495 800 480 880 450 960 448 975 470 985 530 1005 570 1008 630 1060 675 1140 678 1200 650 1240 600 1265 540 1280 480 1278 400 1290 385 1340 392 1400 385 1450 395 1560 415V3200H-10zM-10 565L35 570 20 620 45 660 40 685-10 690zM-10-40H150L155 70 172 110 140 185 110 180 80 162 30 168-10 188zM255 228L290 265 328 300 315 372 280 350 240 320z"/>
       <path d="M975 468Q1030 500 1055 555" fill="none" stroke="#fafaf8" stroke-width="6"/>
       <path d="M1510 150Q1470 310 1395 388" fill="none" stroke="#f6efec" stroke-width="7"/>
       <path fill="#d4dadc" d="M1290 500L1300 530 1380 510 1300 580 1280 610 1240 640 1200 690 1160 712 1142 705 1142 682 1190 668 1230 625 1270 550zM75 910L120 895 160 925 200 900 220 930 210 985 150 955 100 950zM60 800L100 820 110 870 75 900 85 850zM750 500L800 488 770 520zM525 1010L540 1040 530 1035zM470 1075L495 1100 480 1095zM275 1190L285 1140 278 1150zM640 940L650 965 645 950zM875 835L880 860 872 860zM900 465L912 495 902 480zM1180 785L1188 810 1180 800zM1290 865L1300 890 1290 885zM1210 930L1220 970 1212 965zM1380 1010L1390 1040 1380 1035z"/>
      </g>
     </g>
     <path d="M630 352l10 16-4 12-8-14zM600 352l6-6M680 350l6-8M525 316v20M368 210l4 8M8 444l5-3" fill="#d4dadc" stroke="#d4dadc" stroke-width="3"/>
     <g class="river">
      <g transform="matrix(.4592 0 0 .3333 -12 -4)"><path d="M735 900L800 1030 885 1050 920 1115 1000 1130 1100 1230 1200 1280 1270 1350M545 1015L578 1080 577 1200 660 1290M330 1150L360 1180 340 1250 330 1450 345 1560M715 1350L710 1460 690 1560M875 515L830 590 790 600M790 745L735 790 715 880"/></g>
      <g transform="matrix(.4592 0 0 .3333 708 -4)"><path d="M1080 680L1055 800 1065 960 1045 1020 1040 1090 980 1120 920 1240 1030 1295 1110 1450 1240 1510 1300 1560M270 1460L340 1420 450 1370 600 1345 615 1270 760 1255 815 1240 885 1300 870 1355 940 1400 970 1560M380 1420L395 1475 480 1465 570 1425 680 1480 690 1560M250 830L220 900 225 1050 195 1170M875 1000L890 1140"/></g>
      <g transform="matrix(.4592 0 0 .3333 -12 506)"><path d="M345 0L360 70 410 180 530 235 570 300 615 280M690 0L650 135 740 160 775 220 755 370 800 390 805 500M26 230L180 330 225 490 275 640 325 810 400 920 405 1000M130 290L60 260M400 920L320 1020 300 1120M440 1060L460 1095 530 1070 550 1100 570 1180 555 1250 575 1310 570 1400 550 1475M540 1085L640 1030 680 1050 715 1200 800 1180 795 1090 815 1060 900 1225 920 1070 1000 1080 1040 1115 1080 1020 1150 1045M1260 30L1215 120 1240 230 1210 340 1260 430 1280 540 1210 620 1195 740 1140 790 1210 830 1215 900 1260 980 1240 1030M30 320L100 420 80 560 30 640M570 1300L650 1335 700 1390"/></g>
      <g transform="matrix(.4592 0 0 .3333 708 506)"><path d="M690 0L675 100 700 175 790 170 860 125 990 120 1040 180 1025 330 1065 430 1050 590 1030 610 1180 650 1180 700 1120 735 1185 880M175 290L175 430 210 530 180 600 220 650M250 190L400 190 450 230 445 310 540 360 590 430 590 550 660 545 780 690 880 790 890 880 940 980 960 1110 880 1240 820 1190 800 1240M150 690L110 800 110 860 180 900 200 980 240 1010 310 1010 345 1075 460 1065 480 930 420 830 418 760M165 950L185 1150 135 1260 170 1400M-70 430L-40 560 70 640M1507 940L1400 1020 1330 1065 1290 1060M1110 1100L1045 1120 1070 1240M1240 0L1290 45 1400 40 1460 20M1440 20L1500 90"/></g>
     </g>
     <g class="thin">
      <g transform="matrix(.4592 0 0 .3333 -12 -4)"><path d="M120 1110L140 1150 120 1230 150 1260 165 1310 130 1360 30 1375M150 1260L180 1200 290 1355M105 1370L120 1440 180 1470 220 1450M30 1390L80 1460 50 1500 105 1560M580 1195L670 1235 665 1290 620 1280 580 1195M830 1010L840 1085 875 1105 910 1060 905 960 830 1030M1055 860L1025 900 1030 960 1065 1000 1000 1090 1000 1125 1070 1145 1125 1245 1190 1230 1200 1190 1260 1180 1290 1130 1350 1140 1400 1190M1190 1285L1160 1340 1075 1335 1025 1380 1070 1500 1065 1560M540 1560L560 1520 615 1515 620 1560M590 1015L605 1050 590 1075M1480 1190L1568 1160M600 165L615 290 608 400M1245 520L1250 570 1262 570M1310 20L1300 70 1340 75"/></g>
      <g transform="matrix(.4592 0 0 .3333 708 -4)"><path d="M640 575L660 620 668 710 640 740 660 850 690 885 670 940 670 1005 590 1080 635 1160 600 1220 570 1240 560 1285 495 1285 485 1380 460 1460 475 1560M670 1005L690 1055 770 1060 790 1020 835 1030 870 960 920 940 1000 990 1048 980 1045 1020 1125 1025 1160 925 1188 935 1205 865 1165 860 1140 800 1150 720 1142 700M1125 1025L1145 1110 1230 1145 1240 1220 1260 1210 1355 1230 1400 1185 1507 1135M1240 1220L1220 1310 1185 1330 1190 1430 1150 1560M770 1060L750 1130 780 1180 760 1300 795 1320 780 1405 850 1470 970 1525 1030 1560M495 1240L470 1240 450 1300 400 1295 310 1370 280 1350M60 1045L0 1130M60 1045L85 1100 150 1105 130 1170M610 585L570 630M880 450L740 495"/></g>
      <g transform="matrix(.4592 0 0 .3333 -12 506)"><path d="M295 100L340 95 405 10 470 55 465 190 520 180 575 150 570 20 540 10M620 0L625 40 690 20M100 0L110 110 210 140 230 160M685 30L680 140 755 280 755 370 700 455 660 435 600 500 625 590 585 610 575 690 510 740 500 785 440 680 410 750 325 810 240 880 235 935 165 930M500 785L500 850 475 860 500 960 460 1015M755 370L810 400 790 490 825 520 860 475 940 430 1040 375 1070 465 1150 480 1165 560 1170 600 1310 670 1330 620 1395 690 1325 735 1330 800 1255 820 1250 900 1290 950M860 475L890 560 910 640 870 690 860 800 890 850 830 905 820 970 780 985 775 1045 680 1035 690 1150 700 1260 660 1310 570 1260M890 850L940 880 1000 985 1040 980 1020 920 1120 970 1130 860 1200 915 1250 910M1065 0L1085 150 1000 200 1010 370M1310 620L1310 410 1440 360M700 1260L760 1180 830 1190 860 1280 900 1290 905 1390M165 1285L280 1240 340 1280 330 1400M50 410L70 490 30 515M50 410H90M1385 1125L1500 1080 1568 1060"/></g>
      <g transform="matrix(.4592 0 0 .3333 708 506)"><path d="M470 0L470 180 520 250 575 290 570 340 500 305 470 340 460 410 420 455 380 430 300 490M575 310L630 340 690 415 800 380 805 470 840 475 850 575 920 585 915 500 960 465 970 370 990 285 1025 290 1045 190 1080 180M850 575L805 580 805 650 770 690 740 800 705 880M920 585L1030 630 1000 740 1015 845 975 855 975 970 910 1005 900 1060M1030 630L1150 640 1240 720 1275 630 1300 660 1290 570 1380 515 1400 560 1507 575M1240 720L1270 820 1270 870 1190 910 1140 1040M1270 870L1340 880 1370 1000 1430 990M1380 515L1390 440 1370 370 1415 350 1410 270 1340 240 1340 160 1290 90 1150 60 1100 70 1050 60 1000 0M1150 60L1160 0M0 490L100 485 115 420 220 410M0 1010L100 940 175 930 195 870 290 820 325 870 330 940 375 970 375 1060 400 1120M195 870L170 800 195 735 215 740M0 1070L60 1110 55 1285 230 1280 250 1250 340 1250M165 1085L180 1020 235 1040 220 1080 165 1095M280 1260L285 1390 340 1420M470 1210L510 1200 575 1260 650 1240 660 1130 645 1080 665 1010M650 1240L660 1340 680 1300 725 1400M830 1200L870 1270 940 1300 970 1340M780 985L735 1030 730 1130 790 1160M1110 1100L1140 1160 1180 1200 1185 1250"/></g>
     </g>
     <g id="natl">
      <g class="halo">
      <g transform="matrix(.4592 0 0 .3333 -12 -4)"><path d="M610 410L660 410 720 435 740 465 770 435M325 1185L320 1290 300 1350 292 1465 228 1455 222 1530 290 1560M262 1100L270 1140"/></g>
      <g transform="matrix(.4592 0 0 .3333 708 -4)"><path d="M140 870L155 980 185 1180M1250 630L1400 660 1507 680"/></g>
      <g transform="matrix(.4592 0 0 .3333 -12 506)"><path d="M230 0L290 20 290 105 225 180 245 240 160 285 110 265 75 300 120 400 125 490 100 570 115 590 65 640 90 700 85 755 130 820 155 900 160 940 115 1010 110 1070 150 1150M85 755L26 755M115 1010L75 1020 30 1120M26 575L45 600 30 690M50 1200L60 1280 90 1310 130 1290 155 1310 210 1380 230 1430 270 1415 300 1450 380 1440 420 1475M1568 810L1480 880 1380 910 1335 1005 1300 950 1315 1040 1385 1120 1360 1190 1400 1320 1475 1380"/></g>
      <g transform="matrix(.4592 0 0 .3333 708 506)"><path d="M220 290L250 370 245 415 295 460 305 550 260 730 225 700 215 650 160 635 180 690 80 745 70 770 10 780 0 820M260 730L300 710 300 650 350 650 375 740 465 770 505 820 560 795 585 835 540 900 630 1040 700 980 670 900 780 970 840 950 815 1015 870 1090 905 1060 960 1110 1005 1120 1020 1200 1050 1220 1065 1285 1000 1300 960 1370 930 1390M1065 1285L1095 1335 1130 1330 1140 1290 1185 1250 1215 1320 1250 1340 1250 1390M1315 1390L1360 1330 1430 1335 1480 1375 1507 1330"/></g>
      </g>
      <g class="nation">
      <g transform="matrix(.4592 0 0 .3333 -12 -4)"><path d="M610 410L660 410 720 435 740 465 770 435M325 1185L320 1290 300 1350 292 1465 228 1455 222 1530 290 1560"/></g>
      <g transform="matrix(.4592 0 0 .3333 708 -4)"><path d="M140 870L155 980 185 1180M1250 630L1400 660 1507 680"/></g>
      <g transform="matrix(.4592 0 0 .3333 -12 506)"><path d="M230 0L290 20 290 105 225 180 245 240 160 285 110 265 75 300 120 400 125 490 100 570 115 590 65 640 90 700 85 755 130 820 155 900 160 940 115 1010 110 1070 150 1150M85 755L26 755M115 1010L75 1020 30 1120M26 575L45 600 30 690M50 1200L60 1280 90 1310 130 1290 155 1310 210 1380 230 1430 270 1415 300 1450 380 1440 420 1475M155 1310L160 1240 185 1195M1568 810L1480 880 1380 910 1335 1005 1300 950 1315 1040 1385 1120 1360 1190 1400 1320 1475 1380"/></g>
      <g transform="matrix(.4592 0 0 .3333 708 506)"><path d="M220 290L250 370 245 415 295 460 305 550 260 730 225 700 215 650 160 635 180 690 80 745 70 770 10 780 0 820M260 730L300 710 300 650 350 650 375 740 465 770 505 820 560 795 585 835 540 900 630 1040 700 980 670 900 780 970 840 950 815 1015 870 1090 905 1060 960 1110 1005 1120 1020 1200 1050 1220 1065 1285 1000 1300 960 1370 930 1390M1065 1285L1095 1335 1130 1330 1140 1290 1185 1250 1215 1320 1250 1340 1250 1390M1315 1390L1360 1330 1430 1335 1480 1375 1507 1330"/></g>
      </g>
     </g>
     </g>
     <g class="lbl">
      <text class="land" x="348" y="19" textLength="144" lengthAdjust="spacingAndGlyphs" font-size="24">DENMARK</text>
      <text class="town" x="631" y="16" textLength="127" lengthAdjust="spacingAndGlyphs">Copenhagen</text>
      <text x="298" y="241" textLength="151" lengthAdjust="spacingAndGlyphs">SCHLESWIG-</text><text x="313" y="270" textLength="120" lengthAdjust="spacingAndGlyphs">HOLSTEIN</text>
      <text x="526" y="304" textLength="197" lengthAdjust="spacingAndGlyphs">MECKLENBURG-</text><text x="533" y="333" textLength="183" lengthAdjust="spacingAndGlyphs">VORPOMMERN</text>
      <text class="town" x="290" y="352" textLength="93" lengthAdjust="spacingAndGlyphs">Hamburg</text>
      <text x="262" y="447" textLength="89" lengthAdjust="spacingAndGlyphs">LOWER</text><text x="256" y="476" textLength="101" lengthAdjust="spacingAndGlyphs">SAXONY</text>
      <text class="sea" x="1044" y="21" textLength="150">Östersjön /</text><text class="sea" x="1039" y="46" textLength="160">Østersøen /</text><text class="sea" x="1064" y="71" textLength="110">Ostsee /</text>
      <text class="sea" x="1028" y="95" textLength="180" style="font-style:normal;font-weight:700">Балтийское</text><text class="sea" x="1081" y="119" textLength="75" style="font-style:normal;font-weight:700">море</text>
      <text x="1320" y="156" textLength="102" lengthAdjust="spacingAndGlyphs">KALININ</text><text x="1358" y="185" textLength="66" lengthAdjust="spacingAndGlyphs">OBLA</text>
      <text class="town" x="1097" y="228" textLength="74" lengthAdjust="spacingAndGlyphs">Gdansk</text>
      <text x="489" y="571" textLength="110" lengthAdjust="spacingAndGlyphs">SAXONY-</text><text x="495" y="600" textLength="99" lengthAdjust="spacingAndGlyphs">ANHALT</text>
      <text x="124" y="634" textLength="87" lengthAdjust="spacingAndGlyphs">NORTH</text><text x="126" y="663" textLength="85" lengthAdjust="spacingAndGlyphs">RHINE-</text><text x="88" y="693" textLength="160" lengthAdjust="spacingAndGlyphs">WESTPHALIA</text>
      <text class="land" x="350" y="712" textLength="162" lengthAdjust="spacingAndGlyphs" style="font-size:27.500px">GERMANY</text>
      <text x="416" y="748" textLength="137" lengthAdjust="spacingAndGlyphs">THURINGIA</text><text class="town" x="26" y="741" textLength="80" lengthAdjust="spacingAndGlyphs">Cologne</text>
      <text x="262" y="790" textLength="80" lengthAdjust="spacingAndGlyphs">HESSE</text><text class="town" x="172" y="858" textLength="91" lengthAdjust="spacingAndGlyphs">Frankfurt</text>
      <text class="land" x="-2" y="902" textLength="131" lengthAdjust="spacingAndGlyphs">EMBOURG</text><text class="town" x="-1" y="929" textLength="32" lengthAdjust="spacingAndGlyphs">urg</text>
      <text x="45" y="963" textLength="135" lengthAdjust="spacingAndGlyphs">SAARLAND</text><text class="town" x="368" y="952" textLength="114" lengthAdjust="spacingAndGlyphs">Nuremberg</text>
      <text x="654" y="743" textLength="102" lengthAdjust="spacingAndGlyphs">SAXONY</text>
      <text class="land" x="1163" y="556" textLength="117" lengthAdjust="spacingAndGlyphs" style="font-size:25px">POLAND</text><text class="town" x="1307" y="550" textLength="78" lengthAdjust="spacingAndGlyphs">Warsaw</text>
      <text class="town" x="1198" y="619" textLength="46" lengthAdjust="spacingAndGlyphs">Łódź</text><text class="town" x="717" y="862" textLength="69" lengthAdjust="spacingAndGlyphs">Prague</text>
      <text class="town" x="1214" y="865" textLength="73" lengthAdjust="spacingAndGlyphs">Krakow</text><text class="land" x="831" y="902" textLength="115" lengthAdjust="spacingAndGlyphs">CZECHIA</text>
      <path fill="#8797a2" d="M622 6h6v7h-6zM388 342h6v7h-6zM1174 218h6v7h-6zM110 730h6v7h-6zM268 848h6v7h-6zM36 918h6v7h-6zM486 942h6v7h-6zM1390 540h6v7h-6zM1248 608h6v7h-6zM790 852h6v7h-6zM1292 856h6v7h-6z"/>
     </g>
     <g filter="url(#heat)">
      <path fill="#000" fill-opacity=".93" d="M572 480C566 432 590 392 640 388 670 386 685 396 715 391 750 384 800 382 820 410 840 432 850 482 848 520 846 568 813 608 768 612 738 615 718 600 693 602 668 604 650 622 620 612 580 600 568 560 570 525 572 505 574 495 572 480z"/>
      <ellipse cx="650" cy="462" rx="36" ry="36" opacity=".9"/><ellipse cx="640" cy="528" rx="28" ry="36" opacity=".9"/><ellipse cx="775" cy="492" rx="48" ry="76"/>
     </g>
    </svg>
    <div class="shade"></div>
    <div class="zoomer"><svg viewBox="0 0 60 59"><path d="M31 22v24M19 34h24" stroke="#000" stroke-width="4.500"/></svg><svg viewBox="0 0 60 59"><path d="M19 33h24" stroke="#000" stroke-width="4.500"/></svg></div>
    <div class="layers"><svg width="88" height="88" viewBox="0 0 88 88"><g stroke="#6d6d6d" stroke-width="1.500"><path d="M44 36l26 17-26 16-26-16z" fill="#b8b8b8"/><path d="M44 28l26 17-26 16-26-16z" fill="#cfcfcf"/><path d="M44 20l26 17-26 16-26-16z" fill="#efefef" stroke="none"/><path d="M18 37l26 16 26-16" fill="none"/></g><path d="M44 29l15 10-15 11-15-11z" fill="#dadada"/></svg></div>
    <div class="attrib d-flex justify-content-end"><span><a href="#">Leaflet</a> | Data by © <a href="#">OpenStreetMap</a>, under <a href="#">ODbL</a>., © <a href="#">OpenStreetMap</a> contributors © <a href="#">CartoDB</a>, CartoDB <a href="#">attributions</a></span></div>
   </div>
  </main>
 </div>
</div>

<div class="dock d-flex">
 <svg width="76" height="76"><rect width="76" height="76" rx="17" fill="url(#gGrey)"/><path d="M17 0h25C35 16 33 30 32 44h11c0 12 1 22 5 32H17A17 17 0 0 1 0 59V17A17 17 0 0 1 17 0z" fill="url(#gBlue)"/><path d="M15 51c12 13 34 13 46 0M20 22v7M56 22v7" fill="none" stroke="#16232f" stroke-width="2.800" stroke-linecap="round"/></svg>
 <svg width="76" height="76"><rect width="76" height="76" rx="17" fill="#b3b1b4"/><g><rect x="12" y="12" width="14" height="15" rx="3.500" fill="#3edc45"/><rect x="31" y="12" width="14" height="15" rx="3.500" fill="#ffbb14"/><rect x="50" y="12" width="14" height="15" rx="3.500" fill="#f78918"/><rect x="12" y="31" width="14" height="15" rx="3.500" fill="#e5221f"/><rect x="31" y="31" width="14" height="15" rx="3.500" fill="#9da4a8"/><rect x="50" y="31" width="14" height="15" rx="3.500" fill="#fc3e62"/><rect x="12" y="49" width="14" height="15" rx="3.500" fill="#a03fd4"/><rect x="31" y="49" width="14" height="15" rx="3.500" fill="#1e93f8"/><rect x="50" y="49" width="14" height="15" rx="3.500" fill="#35cfa2"/></g></svg>
 <svg width="76" height="76"><rect width="76" height="76" rx="17" fill="url(#gNote)"/><path d="M0 19v-2A17 17 0 0 1 17 0h42a17 17 0 0 1 17 17v2z" fill="#ffcb13"/><path d="M0 19.500h76" stroke="#b5a98c" stroke-width="1.500"/><path d="M3 23h70" stroke="#b8b4ae" stroke-width="1.500" stroke-dasharray="1.500 2"/><path d="M0 38h76M0 57h76" stroke="#cfccd0" stroke-width="1.600"/></svg>
 <svg width="76" height="76"><rect width="76" height="76" rx="17" fill="#f4f3f2"/><circle cx="38" cy="38" r="32.500" fill="#fbbc0b"/><path d="M10.300 21.500A32.500 32.500 0 0 1 66 21.500H38L23 46z" fill="#e0402f"/><path d="M10 21A32.500 32.500 0 0 0 37 70.500L52 46 38 53 24 46z" fill="#2fa24c"/><circle cx="38" cy="37.500" r="15.500" fill="#fff"/><circle cx="38" cy="37.500" r="12.500" fill="#1f74e8"/></svg>
 <svg width="76" height="76"><rect width="76" height="76" rx="17" fill="#fff"/><g stroke-width="11" stroke-linecap="round"><path d="M17 31h14" stroke="#36c5f0"/><path d="M45 17v14" stroke="#2eb67d"/><path d="M45 45h14" stroke="#ecb22e"/><path d="M31 45v14" stroke="#e01e5a"/></g><path d="M36.500 22H31a5.500 5.500 0 1 1 5.500-5.500z" fill="#36c5f0"/><path d="M54 36.500V31a5.500 5.500 0 1 1 5.500 5.500z" fill="#2eb67d"/><path d="M39.500 54H45a5.500 5.500 0 1 1-5.500 5.500z" fill="#ecb22e"/><path d="M22.500 39.500V45a5.500 5.500 0 1 1-5.500-5.500z" fill="#e01e5a"/></svg>
 <svg width="76" height="76"><rect width="76" height="76" rx="17" fill="url(#gSet)"/><circle cx="38" cy="38" r="30" fill="none" stroke="#333638" stroke-width="5" /><circle cx="38" cy="38" r="31" fill="#4e5255"/><circle cx="38" cy="38" r="28" fill="none" stroke="#a2a5a6" stroke-width="3.500" stroke-dasharray="2 1.700"/><circle cx="38" cy="38" r="22.500" fill="#3d4143" stroke="#9da1a2" stroke-width="5"/><path d="M38 38L27 19M38 38h23M38 38L27 57" stroke="#9da1a2" stroke-width="4"/><circle cx="38" cy="38" r="9" fill="none" stroke="#85898b" stroke-width="2"/><circle cx="69" cy="9" r="18" fill="#ee3a31"/><text x="69" y="16.500" text-anchor="middle" font-size="21" font-family="Inter" fill="#fff">2</text></svg>
 <svg width="76" height="76"><rect width="76" height="76" rx="17" fill="#fff"/><path d="M20 12h22v38H20z" fill="#21a366"/><path d="M42 12h21v13H42z" fill="#33c481"/><path d="M42 25h21v13H42z" fill="#21a366"/><path d="M20 38h43v12H20z" fill="#107c41"/><path d="M20 50h43v13H20z" fill="#185c37"/><rect x="6" y="24" width="29" height="28" rx="2" fill="#107c41"/><text x="20.500" y="45" text-anchor="middle" font-family="Open Sans" font-weight="700" font-size="20" fill="#fff">X</text></svg>
 <svg width="76" height="76"><rect width="76" height="76" rx="17" fill="#b3c4cf"/><rect x="2.500" y="2.500" width="71" height="71" rx="15" fill="#000"/><rect x="7" y="8" width="62" height="60" rx="10" fill="#232425"/><path d="M13 15l8 5-8 5M25 28.500h12" fill="none" stroke="#fff" stroke-width="2.500"/></svg>
 <svg width="76" height="76"><rect width="76" height="76" rx="17" fill="#fff"/><path d="M50 12L11 46l0 5 4 3 35-29z" fill="#0065a9"/><path d="M50 65L11 31v-4l4-4 35 28z" fill="#007acc"/><path d="M50 11l15 7v41l-15 7z" fill="#1f9cf0"/></svg>
 <svg width="76" height="76"><path fill-rule="evenodd" fill="url(#gQ)" d="M37-5C63-5 81 13 81 38c0 10-2 17-5 23L62 46c6-20-6-35-24-35-16 0-25 11-25 27 0 17 10 27 25 26l10 15C18 87-7 70-7 38-7 13 12-5 37-5z"/><path d="M30 31h16l8 10-14 12-10-9z" fill="#ee7913"/><path d="M40 43l12-3 8 7-11 13-9-8z" fill="#f5e14c"/><path d="M47 52l14-6 19 21v14H68z" fill="#589632"/><path d="M55 46h8l18 21v5z" fill="#93b86c"/></svg>
 <svg width="76" height="76"><path d="M-7-4L22-1 43-5 72 9 78 42 67 60 56 60 51 81-6 71 0 50-7 34z" fill="#22d88f"/><path d="M10 2L71 10 78 43 67 62 55 60 50 81 25 76z" fill="#9a6cf5"/><path d="M45 6l27 3-5 51-12-5z" fill="#fc3fe8"/><path d="M-7-4L10 15v30L-6 71l6-21-7-16z" fill="#4be08f"/><path d="M30 66l20 15 8-22z" fill="#6b57ff"/><path d="M9 12h54v52H9z" fill="#06100f"/><text x="14" y="37" font-family="Noto Sans" font-weight="700" font-size="26" textLength="41" lengthAdjust="spacingAndGlyphs" fill="#fff">DG</text><path d="M15 56h20" stroke="#fff" stroke-width="4"/></svg>
 <svg width="76" height="76"><rect width="76" height="76" rx="17" fill="url(#gPg)"/><use href="#pgface" fill="#336791" stroke="#fff" stroke-width="1.500"/><path d="M28 17c-4 10-1 20 2 28M48 16c6 8 5 20 0 32M30 30c3-3 5-1 5 4s-2 6 0 12M47 30c-3-2-4 1-4 5" fill="none" stroke="#fff" stroke-width="1.700"/></svg>
 <svg width="76" height="76"><rect width="76" height="76" rx="17" fill="#fff"/><path d="M20 12h43v13H20z" fill="#41a5ee"/><path d="M20 25h43v13H20z" fill="#2b7cd3"/><path d="M20 38h43v12H20z" fill="#185abd"/><path d="M20 50h43v13H20z" fill="#103f91"/><rect x="6" y="24" width="29" height="28" rx="2" fill="#185abd"/><text x="20.500" y="45" text-anchor="middle" font-family="Open Sans" font-weight="700" font-size="19" fill="#fff">W</text></svg>
 <svg width="76" height="76"><rect width="76" height="76" rx="17" fill="#f4f5f6"/><path d="M10 30C16 20 26 20 32 12 42 3 58 5 65 20c5 14 5 30 0 42l-8-1-3-12-8 4v11c-4 3-9 2-11 0l-3-10c-6-4-8 0-8 5-2 9-12 9-17 0l1-13c2-6 0-12 2-16z" fill="url(#gEl)"/><path d="M33 22c14-2 22 8 20 18-2 12-12 14-17 8-4-8-8-16-3-26z" fill="#1177b8" stroke="#0b4d7e" stroke-width="1.500"/><path d="M35 14c6-8 18-8 24 2 5 8 6 18 5 26M42 14c6-4 12 0 14 8" fill="none" stroke="#6ec0d8" stroke-width="2.200" stroke-dasharray="4 2"/><path d="M8 56c3 8 10 8 12 1l2-9" fill="none" stroke="#083e69" stroke-width="2"/></svg>
 <div class="rule"></div>
 <svg width="76" height="76"><path d="M7-1h64l-7 72c-1 8-49 8-50 0z" fill="url(#gBin)" opacity=".95"/><ellipse cx="39" cy="0" rx="32" ry="6" fill="#73797a"/><path d="M10 2l6-6 8-2 4 3 6-4 8 2 6-4 7 5 8-1 4 7-8 7-10-3-8 5-11-3-11 2z" fill="#dcdad6"/><path d="M18 0l8 5 5-6M44 8l8-10 8 8" fill="none" stroke="#6b5f5a" stroke-width="2.500"/><path d="M28 4l8-3 2 7-6 3z" fill="#2aa7d8"/><path d="M50 2l7-2 1 6-6 2z" fill="#c4572e"/></svg>
</div>
</div>
</body>
</html>
